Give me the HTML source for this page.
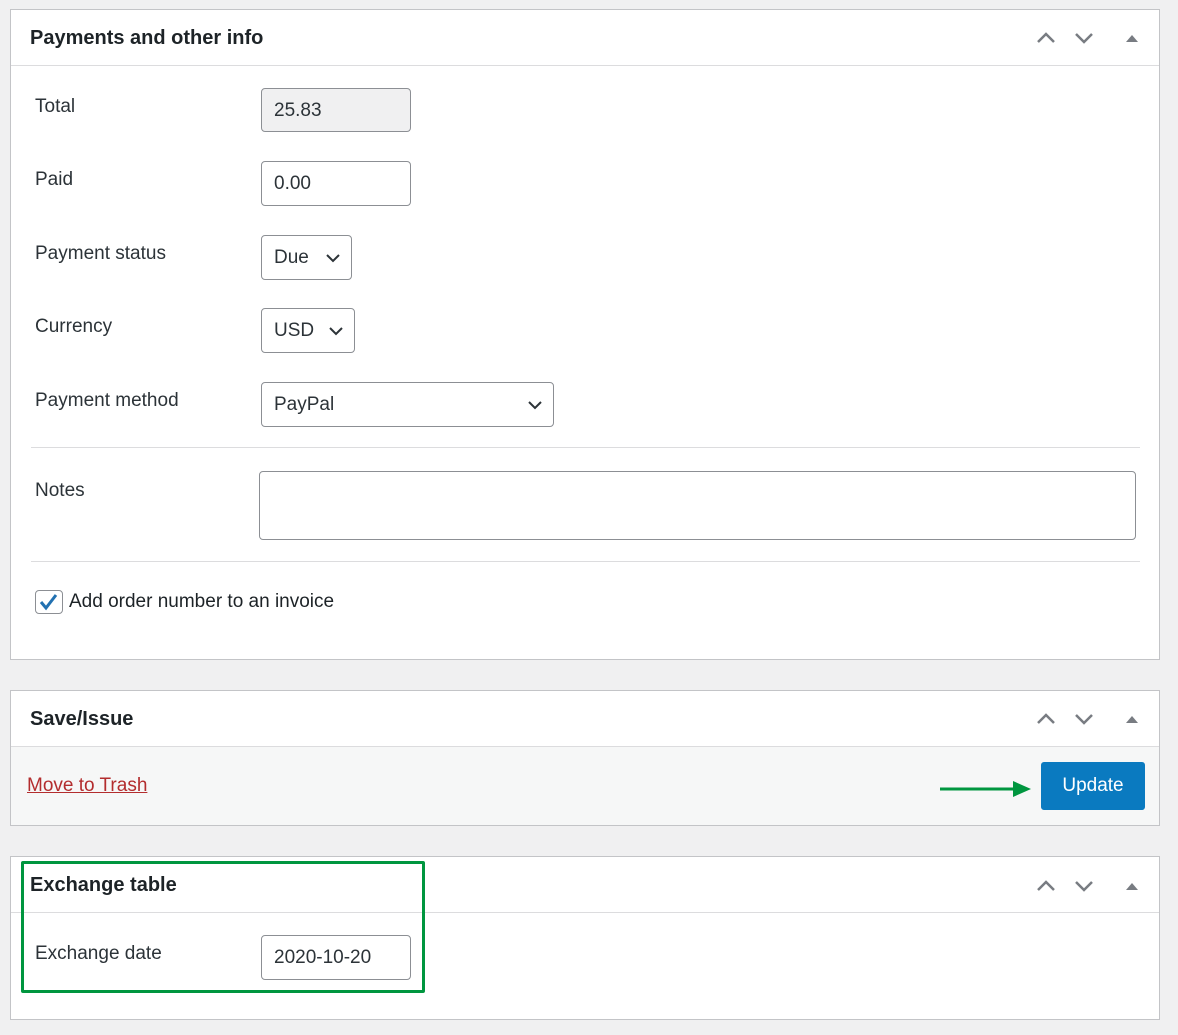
<!DOCTYPE html><html><head><style>
*{box-sizing:border-box;margin:0;padding:0}
body{width:1178px;height:1035px;background:#f0f0f1;font-family:"Liberation Sans",sans-serif;color:#1d2327;position:relative;overflow:hidden}
.p{position:absolute;left:10px;width:1150px;background:#fff;border:1px solid #c3c4c7}
.h{position:absolute;left:0;right:0;top:0;height:56px;border-bottom:1px solid #dcdcde}
.t{position:absolute;left:19px;top:17px;font-size:20px;font-weight:bold;color:#1d2327}
.l{position:absolute;font-size:19px;color:#2c3338}
.i{position:absolute;border:1px solid #8c8f94;border-radius:4px;background:#fff;font-size:19px;padding-left:12px;color:#2c3338;line-height:44px}
.hr{position:absolute;left:20px;right:19px;height:1px;background:#dcdcde}
</style></head><body>
<svg width="0" height="0" style="position:absolute"><defs>
<g id="ic"><path d="M2 12 L10 4 L18 12" fill="none" stroke="#787c82" stroke-width="2.5"/><path d="M40 4 L48 12 L56 4" fill="none" stroke="#787c82" stroke-width="2.5"/><path d="M90 12 L96 5 L102 12Z" fill="#787c82"/></g></defs></svg>

<div class="p" style="top:9px;height:651px">
 <div class="h"><div class="t">Payments and other info</div>
 <svg style="position:absolute;left:1025px;top:20px" width="110" height="16"><use href="#ic"/></svg></div>
 <div class="l" style="left:24px;top:86px">Total</div>
 <div class="i" style="left:250px;top:78px;width:150px;height:44px;background:#f0f0f1">25.83</div>
 <div class="l" style="left:24px;top:159px">Paid</div>
 <div class="i" style="left:250px;top:151px;width:150px;height:45px">0.00</div>
 <div class="l" style="left:24px;top:233px">Payment status</div>
 <div class="i" style="left:250px;top:225px;width:91px;height:45px">Due<svg style="position:absolute;right:10px;top:16px" width="16" height="12"><path d="M2 3 L8 9 L14 3" fill="none" stroke="#2c3338" stroke-width="2"/></svg></div>
 <div class="l" style="left:24px;top:306px">Currency</div>
 <div class="i" style="left:250px;top:298px;width:94px;height:45px">USD<svg style="position:absolute;right:10px;top:16px" width="16" height="12"><path d="M2 3 L8 9 L14 3" fill="none" stroke="#2c3338" stroke-width="2"/></svg></div>
 <div class="l" style="left:24px;top:380px">Payment method</div>
 <div class="i" style="left:250px;top:372px;width:293px;height:45px">PayPal<svg style="position:absolute;right:10px;top:16px" width="16" height="12"><path d="M2 3 L8 9 L14 3" fill="none" stroke="#2c3338" stroke-width="2"/></svg></div>
 <div class="hr" style="top:437px"></div>
 <div class="l" style="left:24px;top:470px">Notes</div>
 <div class="i" style="left:248px;top:461px;width:877px;height:69px"></div>
 <div class="hr" style="top:551px"></div>
 <div style="position:absolute;left:24px;top:580px;width:28px;height:24px;border:1px solid #8c8f94;border-radius:4px"><svg width="26" height="22"><path d="M5 11 L10 17 L20 4" fill="none" stroke="#2271b1" stroke-width="3"/></svg></div>
 <div class="l" style="left:58px;top:581px;color:#1d2327">Add order number to an invoice</div>
</div>

<div class="p" style="top:690px;height:136px">
 <div class="h"><div class="t">Save/Issue</div>
 <svg style="position:absolute;left:1025px;top:20px" width="110" height="16"><use href="#ic"/></svg></div>
 <div style="position:absolute;left:0;right:0;top:56px;bottom:0;background:#f6f7f7"></div>
 <div class="l" style="left:16px;top:84px;color:#b32d2e;text-decoration:underline">Move to Trash</div>
 <svg style="position:absolute;left:927px;top:87px" width="95" height="22"><path d="M2 11 H80" stroke="#00963f" stroke-width="3"/><path d="M75 3 L93 11 L75 19Z" fill="#00963f"/></svg>
 <div style="position:absolute;left:1030px;top:71px;width:104px;height:48px;border-radius:3px;color:#fff;font-size:19px;text-align:center;line-height:48px;background:#0a7ac0">Update</div>
</div>

<div class="p" style="top:856px;height:164px">
 <div class="h"><div class="t">Exchange table</div>
 <svg style="position:absolute;left:1025px;top:21px" width="110" height="16"><use href="#ic"/></svg></div>
 <div class="l" style="left:24px;top:86px">Exchange date</div>
 <div class="i" style="left:250px;top:78px;width:150px;height:45px">2020-10-20</div>
</div>
<div style="position:absolute;left:21px;top:861px;width:404px;height:132px;border:3px solid #00963f;border-radius:2px"></div>
</body></html>
